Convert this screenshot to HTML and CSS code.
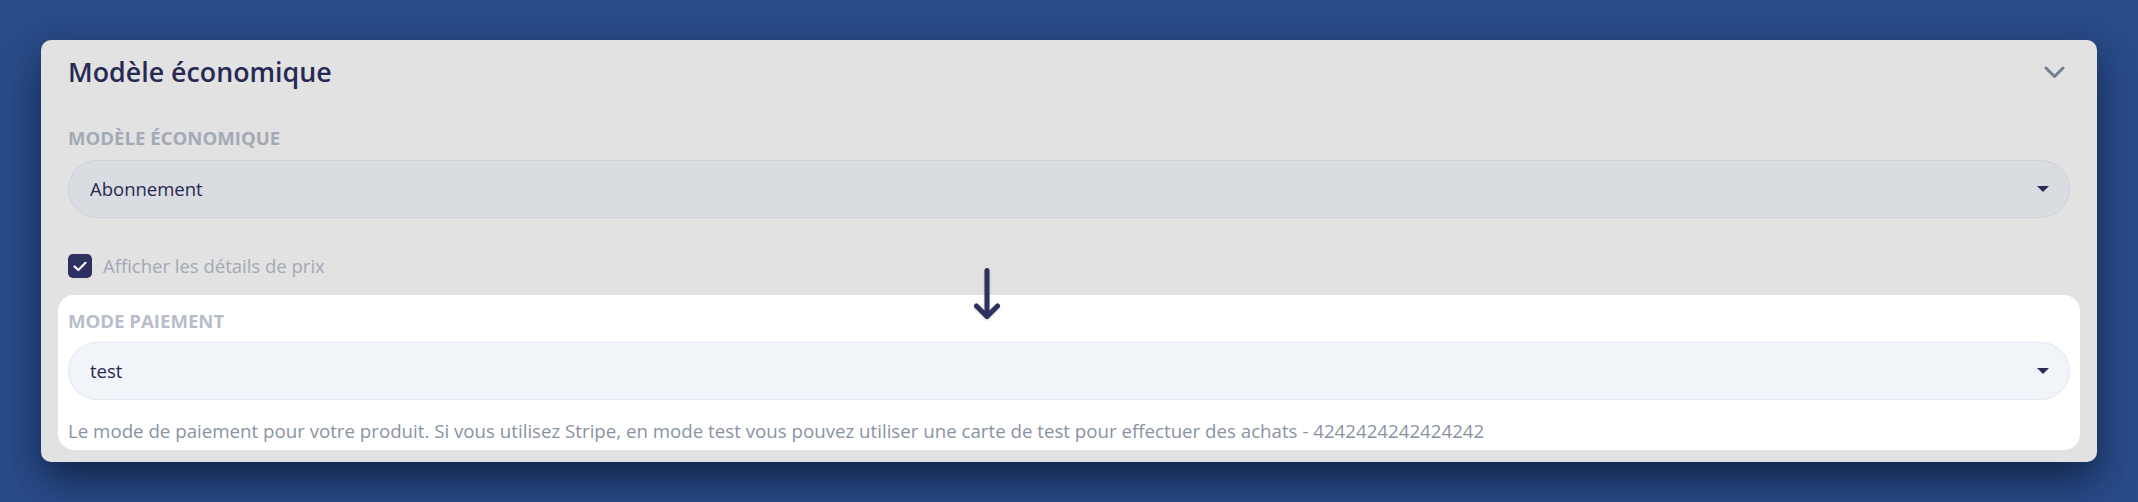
FILE: index.html
```html
<!DOCTYPE html>
<html lang="fr">
<head>
<meta charset="utf-8">
<title>Modèle économique</title>
<link rel="stylesheet" href="styles.css">
</head>
<body>
<div class="page">
  <section class="card">
    <header class="card-header">
      <h2 class="card-title">Modèle économique</h2>
      <svg class="chevron" width="21" height="13" viewBox="0 0 21 13" aria-hidden="true"><path d="M2 2 L10.5 10.5 L19 2" fill="none" stroke="#737e8e" stroke-width="3" stroke-linecap="round" stroke-linejoin="round"/></svg>
    </header>

    <div class="field">
      <div class="field-label">Modèle économique</div>
      <div class="select select-dim">
        <span class="select-value">Abonnement</span>
        <span class="caret"></span>
      </div>
    </div>

    <label class="check-row">
      <span class="checkbox">
        <svg width="24" height="24" viewBox="0 0 24 24" aria-hidden="true"><path d="M6.5 12.5 L10.3 16 L17.5 8.8" fill="none" stroke="#ffffff" stroke-width="2.2" stroke-linecap="round" stroke-linejoin="round"/></svg>
      </span>
      <span class="check-text">Afficher les détails de prix</span>
    </label>

    <div class="panel">
      <div class="field-label field-label-light">Mode paiement</div>
      <div class="select select-light">
        <span class="select-value">test</span>
        <span class="caret"></span>
      </div>
      <p class="help">Le mode de paiement pour votre produit. Si vous utilisez Stripe, en mode test vous pouvez utiliser une carte de test pour effectuer des achats - 4242424242424242</p>
    </div>

    <svg class="pointer-arrow" width="34" height="58" viewBox="0 0 34 58" aria-hidden="true"><path d="M17 4.5 V50.5 M6.5 40 L17 50.5 L27.5 40" fill="none" stroke="#2d3160" stroke-width="5" stroke-linecap="round" stroke-linejoin="round"/></svg>
  </section>
</div>
</body>
</html>
```

FILE: styles.css
```css
* { box-sizing: border-box; }

html, body {
  margin: 0;
  padding: 0;
}

body {
  width: 2138px;
  height: 502px;
  overflow: hidden;
  background: #294b88;
  font-family: "Open Sans", "Noto Sans", sans-serif;
  color: #262a52;
}

.page {
  padding: 40px 41px 0 41px;
}

.card {
  position: relative;
  width: 2056px;
  background: #e2e2e2;
  border-radius: 10px;
  padding: 13px 27px 12px 27px;
  box-shadow: 0 24px 40px -6px rgba(8, 18, 40, 0.55), 0 8px 30px rgba(8, 18, 40, 0.25);
}

.card-header {
  display: flex;
  align-items: center;
  justify-content: space-between;
  height: 38px;
}

.card-title {
  margin: 0;
  font-size: 26.8px;
  line-height: 38px;
  font-weight: 600;
  color: #262a52;
}

.chevron {
  margin-right: 5px;
  margin-top: 1px;
}

.field {
  margin-top: 35px;
}

.field-label {
  font-size: 18.6px;
  line-height: 24px;
  font-weight: 700;
  text-transform: uppercase;
  color: #a3a9b5;
  margin-bottom: 10px;
}

.field-label-light {
  color: #b7bdca;
  margin-bottom: 9px;
}

.select {
  display: flex;
  align-items: center;
  justify-content: space-between;
  height: 58px;
  border-radius: 29px;
  padding: 0 20px 0 21px;
}

.select-dim {
  background: #d9dce0;
  border: 1px solid #cdd2da;
}

.select-light {
  background: #f1f4f9;
  border: 1px solid #e2e8f1;
}

.select-value {
  font-size: 18.5px;
  line-height: 24px;
  color: #262a52;
}

.caret {
  width: 0;
  height: 0;
  border-left: 6px solid transparent;
  border-right: 6px solid transparent;
  border-top: 6px solid #2a2c55;
}

.check-row {
  display: flex;
  align-items: center;
  gap: 11px;
  margin-top: 36px;
  height: 24px;
}

.checkbox {
  display: flex;
  width: 24px;
  height: 24px;
  border-radius: 5px;
  background: #2e3160;
}

.check-text {
  font-size: 18.5px;
  line-height: 24px;
  color: #a3a9b6;
}

.panel {
  margin: 17px -10px 0 -10px;
  padding: 14px 10px 7px 10px;
  background: #ffffff;
  border-radius: 16px;
}

.help {
  margin: 19px 0 0 0;
  font-size: 18.7px;
  line-height: 24px;
  color: #8993a4;
}

.pointer-arrow {
  position: absolute;
  left: 929px;
  top: 226px;
  filter: drop-shadow(0 1px 1px rgba(0, 0, 0, 0.2));
}
```
